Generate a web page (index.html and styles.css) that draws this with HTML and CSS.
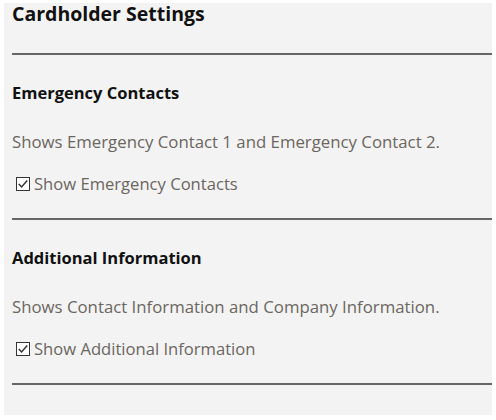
FILE: index.html
```html
<!DOCTYPE html>
<html lang="en">
<head>
  <meta charset="UTF-8">
  <title>Cardholder Settings</title>
  <link rel="stylesheet" href="styles.css">
</head>
<body>
  <div class="panel">
    <h1 class="title">Cardholder Settings</h1>

    <div class="section">
      <h2>Emergency Contacts</h2>
      <p class="desc">Shows Emergency Contact 1 and Emergency Contact 2.</p>
      <label class="check">
        <svg width="14" height="14" viewBox="0 0 14 14"><rect x="0.5" y="0.5" width="13" height="13" fill="#fff" stroke="#333"/><path d="M2.8 7 L5.6 10 L11.2 3.6" fill="none" stroke="#333" stroke-width="1.5"/></svg>
        Show Emergency Contacts
      </label>
    </div>

    <div class="section">
      <h2>Additional Information</h2>
      <p class="desc">Shows Contact Information and Company Information.</p>
      <label class="check">
        <svg width="14" height="14" viewBox="0 0 14 14"><rect x="0.5" y="0.5" width="13" height="13" fill="#fff" stroke="#333"/><path d="M2.8 7 L5.6 10 L11.2 3.6" fill="none" stroke="#333" stroke-width="1.5"/></svg>
        Show Additional Information
      </label>
    </div>
  </div>
</body>
</html>
```

FILE: styles.css
```css
body {
    margin: 0;
    background-color: #fff;
    font-family: "Open Sans", "Noto Sans", sans-serif;
}

.panel {
    margin: 3px 4px 0 4px;
    height: 412px;
    background-color: #f3f3f3;
    padding-left: 8px;
    box-sizing: border-box;
}

.title {
    margin: 0;
    height: 50px;
    font-size: 19.5px;
    line-height: 22px;
    font-weight: bold;
    color: #111;
    border-bottom: 2px solid #666;
}

.section {
    display: flex;
    flex-direction: column;
    padding-top: 28px;
    height: 165px;
    box-sizing: border-box;
    border-bottom: 2px solid #666;
}

.section h2 {
    margin: 0;
    font-size: 16.5px;
    line-height: 20px;
    font-weight: bold;
    color: #111;
}

.desc {
    margin: 29px 0 0 0;
    font-size: 16.8px;
    line-height: 20px;
    color: #6b6660;
}

.check {
    display: flex;
    align-items: center;
    gap: 4px;
    margin: 22px 0 0 4px;
    font-size: 16.6px;
    line-height: 20px;
    color: #6b6660;
}
```
